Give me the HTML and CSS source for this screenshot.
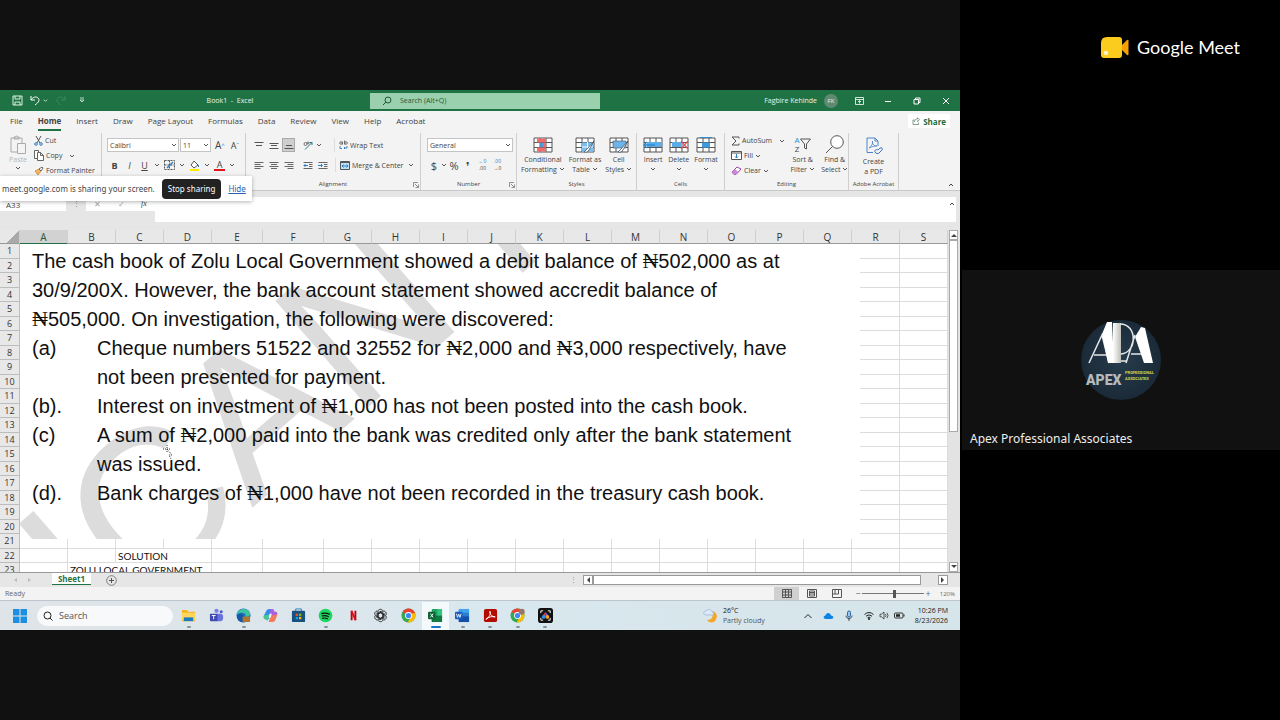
FILE: index.html
```html
<!DOCTYPE html>
<html lang="en">
<head>
    <meta charset="UTF-8">
    <meta name="viewport" content="width=device-width, initial-scale=1.0">
    <title>Google Meet</title>
    <link rel="stylesheet" href="styles.css">
</head>
<body>
    <!-- shared shapes -->
    <svg class="sprite" aria-hidden="true">
        <symbol id="chev" viewBox="0 0 6 6"><path d="M1 2l2 2 2-2" fill="none" stroke="#555" stroke-width="1"/></symbol>
        <symbol id="launch" viewBox="0 0 6 6"><path d="M.5 5V.5H5M2 2l3 3M5.500 2.500v3h-3" stroke="#666" fill="none" stroke-width=".7"/></symbol>
        <symbol id="chrome" viewBox="0 0 16 16">
            <circle cx="8" cy="8" r="7.500" fill="#34a853"/>
            <path d="M8 8L1.500 4.300A7.500 7.500 0 0 1 14.500 4.300z" fill="#ea4335"/>
            <path d="M8 8l6.500-3.700A7.500 7.500 0 0 1 8 15.500l-1-.1 3-5z" fill="#fbbc05"/>
            <path d="M4 4.300h10.500L15 5.500H8z" fill="#ea4335"/>
            <circle cx="8" cy="8" r="3.700" fill="#fff"/><circle cx="8" cy="8" r="2.800" fill="#4285f4"/>
        </symbol>
        <symbol id="grid" viewBox="0 0 20 16"><path d="M1 1h18v14H1zM1 5.500h18M1 10.500h18M7 1v14M13 1v14" stroke="#555" fill="#fff"/></symbol>
    </svg>

    <main class="meeting">
        <section class="stage">
            <div class="screen">
                <header class="titlebar">
                    <div class="quick">
                        <button aria-label="Save"><svg width="11" height="11" viewBox="0 0 11 11"><path d="M1 1h9v9H1zM3 1v3h5V1M3 10V7h5v3" fill="none" stroke="#dff0e5"/></svg></button>
                        <button aria-label="Undo"><svg width="11" height="11" viewBox="0 0 11 11"><path d="M1 1v4h4M1 5c2-3 5-4 7-2s1 4-3 7" fill="none" stroke="#fff"/></svg></button>
                        <svg class="white-chev" width="5" height="5" viewBox="0 0 6 6"><path d="M1 2l2 2 2-2" fill="none" stroke="#dff0e5"/></svg>
                        <button aria-label="Redo"><svg width="11" height="11" viewBox="0 0 11 11"><path d="M10 1v4H6M10 5C8 2 5 1 3 3s-1 4 3 7" fill="none" stroke="#3c8a5c"/></svg></button>
                        <button class="customize" aria-label="Customize toolbar"><svg width="6" height="7" viewBox="0 0 6 7"><path d="M1 1h4M1 3l2 2 2-2z" fill="none" stroke="#dff0e5" stroke-width=".8"/></svg></button>
                    </div>
                    <div class="doc-title">Book1&nbsp; - &nbsp;Excel</div>
                    <label class="tell-me">
                        <svg width="10" height="10" viewBox="0 0 10 10"><circle cx="6" cy="4" r="3" fill="none" stroke="#1d5a37"/><path d="M4 6L1 9" stroke="#1d5a37"/></svg>
                        <input type="text" placeholder="Search (Alt+Q)" aria-label="Search">
                    </label>
                    <div class="account">
                        <span>Fagbire Kehinde</span>
                        <span class="initials">FK</span>
                    </div>
                    <div class="window-buttons">
                        <button aria-label="Ribbon display"><svg width="9" height="8" viewBox="0 0 9 8"><path d="M.5.5h8v7h-8zM.5 2.500h8M4.500 6.500v-3M3 5l1.500-1.500L6 5" fill="none" stroke="#fff" stroke-width=".8"/></svg></button>
                        <button aria-label="Minimize"><svg width="8" height="8" viewBox="0 0 8 8"><path d="M1 4.500h6" stroke="#fff"/></svg></button>
                        <button aria-label="Restore"><svg width="8" height="8" viewBox="0 0 8 8"><path d="M1 2.500h4.500V7H1zM2.500 2V1H7v4.500H6" fill="none" stroke="#fff"/></svg></button>
                        <button aria-label="Close"><svg width="8" height="8" viewBox="0 0 8 8"><path d="M1 1l6 6M7 1L1 7" stroke="#fff"/></svg></button>
                    </div>
                </header>

                <nav class="tabs">
                    <a href="#">File</a>
                    <a href="#" class="active">Home</a>
                    <a href="#">Insert</a>
                    <a href="#">Draw</a>
                    <a href="#">Page Layout</a>
                    <a href="#">Formulas</a>
                    <a href="#">Data</a>
                    <a href="#">Review</a>
                    <a href="#">View</a>
                    <a href="#">Help</a>
                    <a href="#">Acrobat</a>
                    <button class="share"><svg width="8" height="8" viewBox="0 0 8 8"><path d="M2.500 3H1v4.500h5.500V5.500M2.500 5c0-2 1-3 3-3V.7L7.500 2.700 5.500 4.500V3.400" fill="none" stroke="#4f7a62" stroke-width=".7"/></svg>Share</button>
                </nav>

                <div class="ribbon">
                    <section class="group clipboard">
                        <button class="big paste"><svg width="18" height="20" viewBox="0 0 18 20"><path d="M2 3h11v6M2 3v14h6M5 4V2h1.500a1 1 0 0 1 2 0H10v2z" fill="none" stroke="#aaa"/><path d="M8.500 8.500h8v10h-8z" fill="#f4f4f4" stroke="#aaa"/></svg>Paste<svg class="chev"><use href="#chev"/></svg></button>
                        <div class="stack">
                            <button><svg width="9" height="11" viewBox="0 0 9 11"><path d="M2 1l4 7M7 1L3 8" stroke="#555" fill="none"/><circle cx="2" cy="9" r="1.300" fill="none" stroke="#2b7cc4"/><circle cx="7" cy="9" r="1.300" fill="none" stroke="#2b7cc4"/></svg>Cut</button>
                            <button><svg width="10" height="11" viewBox="0 0 10 11"><path d="M3 8.500H.5v-8h4V2M3.500 2.500h3l3 3v5h-6zM6.500 2.500v3h3" fill="#fff" stroke="#555" stroke-width=".9"/></svg>Copy<svg class="chev far"><use href="#chev"/></svg></button>
                            <button><svg width="10" height="10" viewBox="0 0 10 10"><path d="M1 5l4-2 2 2-3 4z" fill="#f3b463" stroke="#c98220" stroke-width=".7"/><path d="M5 3l3-2 1 1-2 3z" fill="#fff" stroke="#444" stroke-width=".8"/></svg>Format Painter</button>
                        </div>
                    </section>

                    <section class="group font">
                        <div class="row">
                            <select class="family" aria-label="Font"><option>Calibri</option></select>
                            <select class="size" aria-label="Font size"><option>11</option></select>
                            <button class="grow" aria-label="Increase font size">A<sup>^</sup></button>
                            <button class="shrink" aria-label="Decrease font size">A<sup>ˇ</sup></button>
                        </div>
                        <div class="row marks">
                            <button><b>B</b></button>
                            <button><i>I</i></button>
                            <button><u>U</u></button>
                            <svg class="chev"><use href="#chev"/></svg>
                            <button aria-label="Borders"><svg width="11" height="10" viewBox="0 0 11 10"><path d="M.5.5h10v9H.5zM.5 5h10M5.500.5v9" fill="none" stroke="#555" stroke-dasharray="2 1"/><path d="M3 8l6-6" stroke="#2b7cc4" stroke-width="1.500"/></svg></button>
                            <svg class="chev"><use href="#chev"/></svg>
                            <button aria-label="Fill colour"><svg width="11" height="11" viewBox="0 0 11 11"><path d="M2 5l3-4 4 4-4 3z" fill="#fff" stroke="#555"/><path d="M9.500 5v2" stroke="#2b7cc4"/><path d="M1 9h9v2H1z" fill="#ffeb00"/></svg></button>
                            <svg class="chev"><use href="#chev"/></svg>
                            <button class="colour">A</button>
                            <svg class="chev"><use href="#chev"/></svg>
                        </div>
                    </section>

                    <section class="group align">
                        <div class="row">
                            <button aria-label="Top align"><svg width="10" height="9" viewBox="0 0 10 9"><path d="M.5 1.500h9M2 4.500h6" stroke="#555"/></svg></button>
                            <button aria-label="Middle align"><svg width="10" height="9" viewBox="0 0 10 9"><path d="M.5 2.500h9M2 4.500h6M.5 7.500h9" stroke="#555"/></svg></button>
                            <button class="on" aria-label="Bottom align"><svg width="10" height="9" viewBox="0 0 10 9"><path d="M2 4.500h6M.5 7.500h9" stroke="#555"/></svg></button>
                            <button class="ruled" aria-label="Orientation"><svg width="10" height="9" viewBox="0 0 10 9"><path d="M2 8.500l7-7M6.500 1.500H9V4" stroke="#2b7c84" fill="none"/><circle cx="2.500" cy="3" r="1.500" fill="none" stroke="#555" stroke-width=".8"/><circle cx="5" cy="2" r="1" fill="none" stroke="#555" stroke-width=".8"/></svg></button>
                            <svg class="chev"><use href="#chev"/></svg>
                            <button class="wrap ruled"><svg width="9" height="10" viewBox="0 0 9 10"><circle cx="2" cy="3" r="1.300" fill="none" stroke="#555" stroke-width=".8"/><path d="M3.500 1.500v3M5.500.5v4" stroke="#555" stroke-width=".8"/><circle cx="7" cy="3" r="1.300" fill="none" stroke="#555" stroke-width=".8"/><path d="M1 6v2.500h2M8 6v2H5l1-1M5 8l1 1" fill="none" stroke="#2b7cc4" stroke-width=".9"/></svg>Wrap Text</button>
                        </div>
                        <div class="row">
                            <button aria-label="Align left"><svg width="10" height="9" viewBox="0 0 10 9"><path d="M.5 1.500h9M.5 3.500h6M.5 5.500h9M.5 7.500h6" stroke="#666"/></svg></button>
                            <button aria-label="Center"><svg width="10" height="9" viewBox="0 0 10 9"><path d="M.5 1.500h9M2 3.500h6M.5 5.500h9M2 7.500h6" stroke="#666"/></svg></button>
                            <button aria-label="Align right"><svg width="10" height="9" viewBox="0 0 10 9"><path d="M.5 1.500h9M3.500 3.500h6M.5 5.500h9M3.500 7.500h6" stroke="#666"/></svg></button>
                            <button class="ruled" aria-label="Decrease indent"><svg width="10" height="9" viewBox="0 0 10 9"><path d="M.5 1.500h9M6 3.500h3.500M6 5.500h3.500M.5 7.500h9" stroke="#666"/><path d="M5 4.500H1M2.500 3L1 4.500 2.500 6" fill="none" stroke="#2b7cc4"/></svg></button>
                            <button aria-label="Increase indent"><svg width="10" height="9" viewBox="0 0 10 9"><path d="M.5 1.500h9M6 3.500h3.500M6 5.500h3.500M.5 7.500h9" stroke="#666"/><path d="M0 4.500h4M3 3l1.500 1.500L3 6" fill="none" stroke="#2b7cc4"/></svg></button>
                            <button class="merge ruled"><svg width="10" height="9" viewBox="0 0 10 9"><path d="M.5.5h9v8h-9z" fill="#bfe0f5" stroke="#555"/><path d="M0 1.500h10" stroke="#555"/><path d="M2 5h6M3.500 3.500L2 5l1.500 1.500M6.500 3.500L8 5 6.500 6.500" fill="none" stroke="#2b7cc4"/></svg>Merge &amp; Center<svg class="chev"><use href="#chev"/></svg></button>
                        </div>
                        <h2>Alignment</h2>
                        <svg class="launch"><use href="#launch"/></svg>
                    </section>

                    <section class="group number">
                        <div class="row"><select class="format" aria-label="Number format"><option>General</option></select></div>
                        <div class="row">
                            <button class="sign">$</button>
                            <svg class="chev"><use href="#chev"/></svg>
                            <button class="sign">%</button>
                            <button class="sign comma">❜</button>
                            <button class="decimals"><span>←0</span><span>.00</span></button>
                            <button class="decimals"><span>.00</span><span>→0</span></button>
                        </div>
                        <h2>Number</h2>
                        <svg class="launch"><use href="#launch"/></svg>
                    </section>

                    <section class="group styles">
                        <button class="big"><svg width="20" height="16" viewBox="0 0 20 16"><use href="#grid"/><path d="M4 1.500h9v4H4zM7 6h6v4H7zM4 10.500h9v4H4z" fill="#f36c6c"/><path d="M7 6h3v4H7z" fill="#4d9bdc"/></svg><span>Conditional<br>Formatting <svg class="chev"><use href="#chev"/></svg></span></button>
                        <button class="big"><svg width="20" height="16" viewBox="0 0 20 16"><use href="#grid"/><path d="M7 5.500h11v9H7z" fill="#7bbdec"/><path d="M7 10h11M12.500 5v10" stroke="#fff"/><path d="M19 4l-7 8-3 3c2 .5 4 0 5-2z" fill="#fff" stroke="#456" stroke-width=".8"/></svg><span>Format as<br>Table <svg class="chev"><use href="#chev"/></svg></span></button>
                        <button class="big"><svg width="20" height="16" viewBox="0 0 20 16"><use href="#grid"/><path d="M4 4h13v7H4z" fill="#6db3e8" stroke="#456" stroke-width=".6"/><path d="M19 4l-7 8-3 3c2 .5 4 0 5-2z" fill="#fff" stroke="#456" stroke-width=".8"/></svg><span>Cell<br>Styles <svg class="chev"><use href="#chev"/></svg></span></button>
                        <h2>Styles</h2>
                    </section>

                    <section class="group cells">
                        <button class="big"><svg width="20" height="16" viewBox="0 0 20 16"><use href="#grid"/><path d="M4 5h15v5H4z" fill="#5aaee5"/><path d="M12 8H1M4 5L1 8l3 3" fill="none" stroke="#2b8cd4" stroke-width="1.300"/></svg><span>Insert<br><svg class="chev"><use href="#chev"/></svg></span></button>
                        <button class="big"><svg width="20" height="16" viewBox="0 0 20 16"><use href="#grid"/><path d="M3 5h9v5H3z" fill="#5aaee5"/><path d="M12 4l7 8M19 4l-7 8" stroke="#e25563" stroke-width="1.300"/></svg><span>Delete<br><svg class="chev"><use href="#chev"/></svg></span></button>
                        <button class="big"><svg width="20" height="16" viewBox="0 0 20 16"><use href="#grid"/><path d="M6 5.500h8v5H6z" fill="#3f9be0"/><path d="M4 .5h12" stroke="#2b8cd4"/></svg><span>Format<br><svg class="chev"><use href="#chev"/></svg></span></button>
                        <h2>Cells</h2>
                    </section>

                    <section class="group editing">
                        <div class="stack">
                            <button><svg width="9" height="10" viewBox="0 0 9 10"><path d="M8 2.500V1H1l4 4-4 4h7V7.500" fill="none" stroke="#555"/></svg>AutoSum<svg class="chev far"><use href="#chev"/></svg></button>
                            <button><svg width="11" height="9" viewBox="0 0 11 9"><path d="M.5.5h10v8H.5zM.5 2h10" fill="#fff" stroke="#555"/><path d="M5.500 3v4M4 5.500L5.500 7 7 5.500" fill="none" stroke="#2b7cc4"/></svg>Fill <svg class="chev"><use href="#chev"/></svg></button>
                            <button><svg width="11" height="9" viewBox="0 0 11 9"><path d="M1 6l5-5 4 2-5 5.500H3z" fill="#fff" stroke="#9a3fa8"/><path d="M1 6l3-3 3 3-2 2.500H3z" fill="#c98ad2"/></svg>Clear <svg class="chev"><use href="#chev"/></svg></button>
                        </div>
                        <button class="big"><span class="sort"><span><b>A</b><b>Z</b></span><svg width="11" height="12" viewBox="0 0 11 12"><path d="M.5 1h10l-4 5v5l-2-1V6z" fill="none" stroke="#555"/></svg></span><span>Sort &amp;<br>Filter <svg class="chev"><use href="#chev"/></svg></span></button>
                        <button class="big"><svg width="20" height="18" viewBox="0 0 20 18"><circle cx="12" cy="7" r="6.300" fill="#fff" stroke="#555"/><path d="M7.500 11.500L1 18" stroke="#555"/></svg><span>Find &amp;<br>Select <svg class="chev"><use href="#chev"/></svg></span></button>
                        <h2>Editing</h2>
                    </section>

                    <section class="group acrobat">
                        <button class="big"><svg width="18" height="18" viewBox="0 0 18 18"><path d="M8 15.500H2V1h8l3 3v5M10 1v3h3" fill="none" stroke="#4d84c8"/><path d="M4 11c3-2 4-5 3.500-7C7 7 9 9 12 9c-3 0-5 .5-8 2z" fill="none" stroke="#4d84c8" stroke-width=".8"/><path d="M10 15c-1-2 2-3 3-2l2-2c2-1 3 1 2 2l-3 3c-1 1-3 1-4-1z" fill="none" stroke="#3c74c8"/></svg><span>Create<br>a PDF</span></button>
                        <h2>Adobe Acrobat</h2>
                    </section>
                    <div class="collapse"><svg width="6" height="6" viewBox="0 0 6 6"><path d="M1 4l2-2 2 2" fill="none" stroke="#444"/></svg></div>
                </div>

                <div class="formula-bar">
                    <input class="name-box" type="text" value="A33" aria-label="Name box">
                    <span class="dots">⋮</span>
                    <div class="fx"><span>✕</span><span>✓</span><i>fx</i></div>
                    <div class="formula"><input type="text" aria-label="Formula"><svg width="6" height="6" viewBox="0 0 6 6"><path d="M1 4l2-2 2 2" fill="none" stroke="#444"/></svg></div>
                </div>

                <div class="sheet-area">
                    <div class="sheet">
                        <table>
                            <colgroup id="cols"></colgroup>
                            <thead><tr id="letters"></tr></thead>
                            <tbody id="rows"></tbody>
                        </table>
                        <article class="question">
                            <svg class="watermark" viewBox="0 0 840 295" aria-hidden="true">
                                <text transform="translate(232 264) rotate(-41)" x="-205" y="0">ICAN M</text>
                            </svg>
                            <p>The cash book of Zolu Local Government showed a debit balance of <span>₦</span>502,000 as at<br>30/9/200X. However, the bank account statement showed accredit balance of<br><span>₦</span>505,000. On investigation, the following were discovered:</p>
                            <dl>
                                <dt>(a)</dt><dd>Cheque numbers 51522 and 32552 for <span>₦</span>2,000 and <span>₦</span>3,000 respectively, have<br>not been presented for payment.</dd>
                                <dt>(b).</dt><dd>Interest on investment of <span>₦</span>1,000 has not been posted into the cash book.</dd>
                                <dt>(c)</dt><dd>A sum of <span>₦</span>2,000 paid into the bank was credited only after the bank statement<br>was issued.</dd>
                                <dt>(d).</dt><dd>Bank charges of <span>₦</span>1,000 have not been recorded in the treasury cash book.</dd>
                            </dl>
                            <svg class="pointer" width="10" height="14" viewBox="0 0 10 14"><path d="M4 0v8M0 4h8M4 4l5 6-3 0 2 4" fill="none" stroke="#333" stroke-dasharray="1 1"/></svg>
                        </article>
                    </div>
                    <div class="vscroll">
                        <button aria-label="Scroll up"><svg width="6" height="4" viewBox="0 0 6 4"><path d="M0 4l3-3 3 3z" fill="#444"/></svg></button>
                        <div class="thumb"></div>
                        <button aria-label="Scroll down"><svg width="6" height="4" viewBox="0 0 6 4"><path d="M0 0l3 3 3-3z" fill="#444"/></svg></button>
                    </div>
                </div>

                <div class="sheet-tabs">
                    <span class="arrows"><svg width="4" height="6" viewBox="0 0 4 6"><path d="M4 1v4L1 3z" fill="#bbb"/></svg><svg width="4" height="6" viewBox="0 0 4 6"><path d="M0 1v4l3-2z" fill="#bbb"/></svg></span>
                    <button class="sheet-tab">Sheet1</button>
                    <button class="add-sheet" aria-label="New sheet"><svg width="11" height="11" viewBox="0 0 11 11"><circle cx="5.500" cy="5.500" r="4.800" fill="none" stroke="#666" stroke-width=".8"/><path d="M5.500 3v5M3 5.500h5" stroke="#555"/></svg></button>
                    <span class="dots">⋮</span>
                    <div class="hscroll">
                        <button aria-label="Scroll left"><svg width="4" height="6" viewBox="0 0 4 6"><path d="M4 0v6L1 3z" fill="#444"/></svg></button>
                        <div class="thumb"></div>
                        <button aria-label="Scroll right"><svg width="4" height="6" viewBox="0 0 4 6"><path d="M0 0v6l3-3z" fill="#444"/></svg></button>
                    </div>
                </div>

                <div class="status">
                    <span>Ready</span>
                    <div class="views">
                        <button class="on" aria-label="Normal"><svg width="10" height="9" viewBox="0 0 10 9"><path d="M.5.5h9v8h-9zM.5 3h9M.5 6h9M3.500.5v8M6.500.5v8" fill="none" stroke="#555"/></svg></button>
                        <button aria-label="Page layout"><svg width="10" height="9" viewBox="0 0 10 9"><path d="M.5.5h9v8h-9zM2.500 2h5v5h-5zM3 3.500h4M3 5h4" fill="none" stroke="#555"/></svg></button>
                        <button aria-label="Page break"><svg width="10" height="9" viewBox="0 0 10 9"><path d="M.5.5h9v8h-9zM3 1v4M6.500 1v4M.5 5h6" fill="none" stroke="#555"/></svg></button>
                    </div>
                    <span class="zoom-sign">−</span>
                    <input type="range" min="0" max="100" value="52" aria-label="Zoom">
                    <span class="zoom-sign">+</span>
                    <span class="percent">120%</span>
                </div>

                <footer class="taskbar">
                    <button class="start" aria-label="Start"><svg width="16" height="16" viewBox="0 0 16 16"><path d="M1 1h6.500v6.500H1zM8.500 1H15v6.500H8.500zM1 8.500h6.500V15H1zM8.500 8.500H15V15H8.500z" fill="#1d8fe0"/></svg></button>
                    <label class="search"><svg width="10" height="10" viewBox="0 0 10 10"><circle cx="4.500" cy="4.500" r="3.500" fill="none" stroke="#222"/><path d="M7 7l2.500 2.500" stroke="#222"/></svg><input type="text" placeholder="Search" aria-label="Search Windows"></label>
                    <div class="apps">
                        <button class="open" aria-label="File Explorer"><svg viewBox="0 0 16 16"><path d="M1 2h5l2 2h7v10H1z" fill="#f6b41c"/><path d="M1 5h14v8H1z" fill="#ffd65a"/><path d="M3 10h10v4H3z" fill="#1a7cc4"/></svg></button>
                        <button aria-label="Teams"><svg viewBox="0 0 16 16"><circle cx="8" cy="3" r="2.300" fill="#7b83eb"/><circle cx="13" cy="4" r="1.700" fill="#5059c9"/><rect x="6" y="6" width="9" height="8" rx="3" fill="#6a72dd"/><rect x="1" y="6" width="8" height="8" rx="1" fill="#4048b4"/><path d="M3 8h4M5 8v4" stroke="#fff"/></svg></button>
                        <button class="open" aria-label="Edge"><svg viewBox="0 0 16 16"><circle cx="8" cy="8" r="7.500" fill="#1778c8"/><path d="M.7 7C2 1 10-1 14 3.500c3 4-1 7-4 6 2-4-4-6-9.300-2.500z" fill="#40c4a0"/><path d="M1 8c3-4 8-2 7 1-2 2 0 4 3 5-5 3-10 0-10-6z" fill="#1558a8"/><rect x="7" y="9" width="8" height="6" rx="1" fill="#b07532"/></svg></button>
                        <button aria-label="Copilot"><svg viewBox="0 0 16 16"><path d="M4 2q1-1 3-1h3L7 10l-1 2H3q-3 0-2-4z" fill="#2f8df0"/><path d="M1 8l6-1-2 6q-1 1-2-1H2Q0 11 1 8z" fill="#45c78a"/><path d="M12 4h1q3 0 2 4l-2 5q-1 2-3 2H6l3-9z" fill="#f37a5c"/><path d="M8 1h2q2 0 2 3h2q2 1 1 3l-6 1-2-1z" fill="#a861e0"/><path d="M7 6h2.500L8 10.500H6z" fill="#f3f6f9"/></svg></button>
                        <button aria-label="Store"><svg viewBox="0 0 16 16"><path d="M5 4V1h6v3" fill="none" stroke="#2a7cc0"/><rect x="1" y="3" width="14" height="12" rx="1" fill="#18507f"/><path d="M5 6h2.500v2.500H5z" fill="#f25022"/><path d="M8.500 6H11v2.500H8.500z" fill="#7fba00"/><path d="M5 9.500h2.500V12H5z" fill="#00a4ef"/><path d="M8.500 9.500H11V12H8.500z" fill="#ffb900"/></svg></button>
                        <button class="open" aria-label="Spotify"><svg viewBox="0 0 16 16"><circle cx="8" cy="8" r="7.300" fill="#1ed760"/><path d="M3.500 6c3-1 6-.7 9 .8M4 8.500c3-.8 5-.5 7.500.8M4.500 11c2-.6 4-.4 6 .7" fill="none" stroke="#111" stroke-width="1.300"/></svg></button>
                        <button aria-label="Netflix"><svg viewBox="0 0 16 16"><path d="M6 3v10M10 3v10" stroke="#b1060f" stroke-width="2"/><path d="M5.800 3l4.400 10" stroke="#e50914" stroke-width="2"/></svg></button>
                        <button aria-label="ChatGPT"><svg viewBox="0 0 16 16"><g fill="none" stroke="#222" stroke-width=".9"><path id="knot" d="M5.300 9.500V4c0-3 4-3.500 5.200-1.200M5.300 6.500L9 4.400l3.600 2"/><use href="#knot" transform="rotate(60 8 8)"/><use href="#knot" transform="rotate(120 8 8)"/><use href="#knot" transform="rotate(180 8 8)"/><use href="#knot" transform="rotate(240 8 8)"/><use href="#knot" transform="rotate(300 8 8)"/></g></svg></button>
                        <button aria-label="Chrome"><svg><use href="#chrome"/></svg></button>
                        <button class="open current" aria-label="Excel"><svg viewBox="0 0 16 16"><rect x="4" y="1" width="11" height="14" rx="1" fill="#21a366"/><path d="M9.500 8H15v6a1 1 0 0 1-1 1H4V8z" fill="#107c41"/><path d="M10 1h4a1 1 0 0 1 1 1v6h-5z" fill="#33c481"/><rect y="4" width="8" height="8" rx="1" fill="#0b6434"/><path d="M2.500 6l3 4M5.500 6l-3 4" stroke="#fff"/></svg></button>
                        <button class="open" aria-label="Word"><svg viewBox="0 0 16 16"><rect x="4" y="1" width="11" height="14" rx="1" fill="#2b7cd3"/><path d="M4 1h11v4H4z" fill="#41a5ee"/><path d="M4 9h11v6H4z" fill="#144fa8"/><rect y="4" width="8" height="8" rx="1" fill="#185abd"/><path d="M1.500 6l1.200 4L4 6.500 5.300 10l1.200-4" fill="none" stroke="#fff" stroke-width=".9"/></svg></button>
                        <button class="open" aria-label="Acrobat"><svg viewBox="0 0 16 16"><rect x="1" y="1" width="14" height="14" rx="2" fill="#b30b00"/><path d="M3 12c3-1 6-6 4.500-8.500C6 4 9 10 13 9.500 10 8.500 6 9.500 3 12z" fill="none" stroke="#fff"/></svg></button>
                        <button class="open" aria-label="Chrome profile"><svg viewBox="0 0 16 16"><use href="#chrome"/><circle cx="12.500" cy="4" r="3.200" fill="#94796a"/></svg></button>
                        <button class="open" aria-label="Studio"><svg viewBox="0 0 16 16"><rect width="16" height="16" rx="3" fill="#111"/><path d="M3 5.500V3h2.500M10.500 3H13v2.500M13 10.500V13h-2.500M5.500 13H3v-2.500" fill="none" stroke="#fff"/><path d="M8 4L5 8l3 1z" fill="#e9443a"/><path d="M8 4l3 4-3 1z" fill="#6c5ce7"/><circle cx="6" cy="9.500" r="2" fill="#2f8df0"/><circle cx="10" cy="9.500" r="2" fill="#f2a32c"/></svg></button>
                    </div>
                    <div class="weather">
                        <svg width="16" height="16" viewBox="0 0 16 16"><path d="M9 3c5 1 7 6 2 11-3 1-6 0-7-2 5 0 7-4 5-9z" fill="#f4a62a"/><path d="M3 3c2-3 6-1 6 1 3 0 2 3 0 3H3C0 7 0 3 3 3z" fill="#dce9f8" stroke="#88a8d8" stroke-width=".6"/></svg>
                        <span>26°C<br><small>Partly cloudy</small></span>
                    </div>
                    <div class="tray">
                        <svg width="10" height="10" viewBox="0 0 10 10"><path d="M1.500 7L5 3.500 8.500 7" fill="none" stroke="#222"/></svg>
                        <svg width="11" height="10" viewBox="0 0 11 10"><path d="M3 8C0 8 0 5 2.500 4.500 3.500 1 7.500 1.500 8 4.500c3 0 3 3.500 0 3.500z" fill="#0a84e0"/></svg>
                        <svg width="10" height="12" viewBox="0 0 10 12"><rect x="3.500" y="1" width="3" height="6" rx="1.500" fill="#9cc7ec" stroke="#27639c"/><path d="M2 5.500c0 4 6 4 6 0M5 8.500V11" fill="none" stroke="#345"/></svg>
                        <span class="net">
                            <svg width="10" height="9" viewBox="0 0 10 9"><path d="M.5 3.500q4.500-4 9 0M2 5.200q3-2.700 6 0M3.500 6.800q1.500-1.400 3 0" fill="none" stroke="#222"/><circle cx="5" cy="8" r=".9"/></svg>
                            <svg width="10" height="9" viewBox="0 0 10 9"><path d="M1 3.200h1.500L5 1v7L2.500 5.800H1zM6.500 3q1 1.500 0 3M8 1.800q2 2.700 0 5.400" fill="none" stroke="#333" stroke-width=".8"/></svg>
                            <svg width="11" height="9" viewBox="0 0 11 9"><rect x=".5" y="2" width="8.500" height="5" rx="1" fill="none" stroke="#333"/><path d="M2 3.200h4v2.600H2zM9.500 3.500h1v2h-1z" fill="#222"/></svg>
                        </span>
                        <time>10:26 PM<br>8/23/2026</time>
                    </div>
                </footer>

                <div class="sharing">
                    <span>meet.google.com is sharing your screen.</span>
                    <button>Stop sharing</button>
                    <a href="#">Hide</a>
                </div>
            </div>
        </section>

        <aside class="people">
            <div class="brand">
                <svg width="28" height="23" viewBox="0 0 28 23"><path d="M20 10l6-6q1.500-.8 1.500.8v13.400q0 1.600-1.500.8l-6-6z" fill="#f9a000"/><path d="M6 1h12q3 0 3 3v15q0 3-3 3H3q-3 0-3-3V7q0-6 6-6z" fill="#fbcb1e"/><circle cx="5" cy="17" r="2.300" fill="#fff3c4"/></svg>
                Google Meet
            </div>
            <div class="tile">
                <svg class="avatar" width="80" height="80" viewBox="0 0 80 80">
                    <defs>
                        <radialGradient id="disc"><stop offset="0" stop-color="#263c4d"/><stop offset="1" stop-color="#1b2a38"/></radialGradient>
                        <linearGradient id="beam"><stop offset="0" stop-color="#fff"/><stop offset="1" stop-color="#bdbdb8"/></linearGradient>
                    </defs>
                    <circle cx="40" cy="40" r="40" fill="url(#disc)"/>
                    <path d="M8 43l13-28 7 28M13 35h15" fill="none" stroke="#e4e8ea" stroke-width="1.500"/>
                    <path d="M21 14l5-12 5 0 2 41h-6z" fill="#fff"/>
                    <path d="M32 3h8v40h-8z" fill="url(#beam)"/>
                    <path d="M39 4c18 0 17 29 1 30M40 41h6M54 15L45 43M50 34h12" fill="none" stroke="#e4e8ea" stroke-width="1.500"/>
                    <path d="M54 17l6-10 4 1 8 35h-9z" fill="#fff"/>
                    <text x="5" y="65" class="apex">APEX</text>
                    <text x="44" y="54" class="apex-sub">PROFESSIONAL</text>
                    <text x="44" y="60" class="apex-sub">ASSOCIATES</text>
                </svg>
                <span class="name">Apex Professional Associates</span>
            </div>
        </aside>
    </main>

    <script>
        // Column widths, A to S
        const widths = [48, 48, 48, 48, 51, 61, 48, 48, 48, 48, 48, 48, 48, 48, 48, 48, 48, 48, 48];
        const cols = document.getElementById("cols");
        const letters = document.getElementById("letters");
        const rows = document.getElementById("rows");

        // Cell contents: row number -> [column index, text, cells it spans]
        const content = {
            22: [2, "SOLUTION", 2],
            23: [1, "ZOLU LOCAL GOVERNMENT", 3]
        };

        cols.innerHTML = "<col width='20'>" + widths.map(w => `<col width="${w}">`).join("");
        letters.innerHTML = "<th class='corner'></th>" + widths
            .map((w, i) => `<th>${String.fromCharCode(65 + i)}</th>`)
            .join("");

        for (let r = 1; r <= 23; r++) {
            let html = `<th>${r}</th>`;
            for (let c = 0; c < widths.length; c++) {
                const cell = content[r];
                if (cell && cell[0] === c) {
                    html += `<td colspan="${cell[2]}">${cell[1]}</td>`;
                    c += cell[2] - 1;
                } else {
                    html += "<td></td>";
                }
            }
            rows.insertAdjacentHTML("beforeend", `<tr>${html}</tr>`);
        }
    </script>
</body>
</html>
```

FILE: styles.css
```css
* {
    box-sizing: border-box;
}
body {
    margin: 0;
    background: #000;
    font-family: "Open Sans", "Noto Sans", sans-serif;
    color: #444;
}
button, input, select {
    font: inherit;
    color: inherit;
    border: none;
    background: none;
    padding: 0;
    margin: 0;
    min-width: 0;
}
button {
    display: flex;
    align-items: center;
    justify-content: center;
    white-space: nowrap;
}
a {
    color: inherit;
    text-decoration: none;
}
svg {
    flex: none;
}
.sprite {
    position: absolute;
    width: 0;
    height: 0;
}
.chev {
    width: 6px;
    height: 6px;
}
.meeting {
    display: grid;
    grid-template-columns: 3fr 1fr;
    min-height: 100vh;
}
.stage {
    display: flex;
    align-items: center;
    background: #111;
}
.screen {
    position: relative;
    display: flex;
    flex-direction: column;
    width: 100%;
    aspect-ratio: 16 / 9;
    background: #f3f3f3;
    overflow: hidden;
    font-size: 7px;
}

/* title bar */
.titlebar {
    display: grid;
    grid-template-columns: 90fr 280fr 230fr 245fr 115fr;
    align-items: center;
    height: 21px;
    background: #1f7244;
    color: #e8f4ec;
}
.quick {
    display: flex;
    align-items: center;
    gap: 7px;
    padding-left: 12px;
}
.white-chev {
    margin-left: -5px;
}
.customize {
    margin-left: 6px;
}
.doc-title {
    text-align: center;
}
.tell-me {
    display: flex;
    align-items: center;
    gap: 8px;
    height: 16px;
    padding-left: 12px;
    background: #9bd0ae;
    color: #1f5a38;
}
.titlebar .tell-me input::placeholder {
    color: #1f5a38;
}
.account {
    display: flex;
    align-items: center;
    justify-content: flex-end;
    gap: 7px;
    padding-right: 7px;
}
.initials {
    width: 14px;
    height: 14px;
    border-radius: 50%;
    background: #5f8a72;
    font-size: 6px;
    line-height: 14px;
    text-align: center;
}
.window-buttons {
    display: grid;
    grid-template-columns: repeat(4, 1fr);
}

/* ribbon tabs */
.tabs {
    display: flex;
    align-items: center;
    gap: 15px;
    height: 20px;
    padding: 0 10px;
    font-size: 8px;
}
.tabs a {
    line-height: 17px;
    border-bottom: 2px solid transparent;
}
.tabs .active {
    font-weight: 700;
    border-color: #1f7244;
}
.share {
    margin-left: auto;
    gap: 3px;
    height: 14px;
    padding: 0 4px;
    background: #fff;
    color: #1f6b40;
    font-weight: 700;
}

/* ribbon */
.ribbon {
    display: grid;
    grid-template-columns:
        minmax(0, 102fr) minmax(0, 144fr) minmax(0, 175fr)
        minmax(0, 96fr) minmax(0, 120fr) minmax(0, 88fr)
        minmax(0, 124fr) minmax(0, 50fr) minmax(0, 61fr);
    height: 60px;
    padding-top: 2px;
    border-bottom: 1px solid #c8c8c8;
}
.group {
    position: relative;
    border-right: 1px solid #cfcfcf;
    padding: 2px 0 0 6px;
}
.group h2 {
    position: absolute;
    left: 0;
    right: 0;
    bottom: 1px;
    margin: 0;
    font-size: 6px;
    font-weight: 400;
    line-height: 9px;
    text-align: center;
}
.launch {
    position: absolute;
    right: 1px;
    bottom: 2px;
    width: 6px;
    height: 6px;
}
.row {
    display: flex;
    align-items: center;
    height: 20px;
}
.stack {
    display: grid;
    grid-auto-rows: 15px;
    justify-items: start;
}
.stack button {
    gap: 2px;
}
.far {
    margin-left: 5px;
}
.big {
    display: flex;
    flex-direction: column;
    justify-content: flex-start;
    gap: 2px;
    line-height: 10px;
}
select {
    appearance: none;
    height: 14px;
    padding: 0 2px;
    border: 1px solid #c4c4c4;
    background: #fff url("data:image/svg+xml,%3Csvg xmlns='http://www.w3.org/2000/svg' width='6' height='6'%3E%3Cpath d='M1 2l2 2 2-2' fill='none' stroke='%23555'/%3E%3C/svg%3E") no-repeat right 1px center;
}
.clipboard {
    display: flex;
    gap: 7px;
    padding: 0 0 0 9px;
}
.paste {
    gap: 0;
    padding-top: 2px;
    color: #b5b5b5;
}
.font {
    padding-left: 5px;
}
.family {
    width: 72px;
}
.size {
    width: 31px;
    margin-left: 1px;
}
.grow, .shrink {
    margin-left: 4px;
    font-size: 10px;
}
.grow sup, .shrink sup {
    font-size: 6px;
    color: #2b7cc4;
}
.shrink {
    font-size: 9px;
    margin-left: 6px;
}
.marks {
    gap: 4px;
    padding-left: 2px;
    font-size: 9px;
}
.marks button {
    min-width: 11px;
}
.marks .colour {
    line-height: 9px;
    border-bottom: 2px solid #e3151a;
}
.align .row button {
    width: 13px;
    height: 14px;
    margin-right: 2px;
}
.align .row .ruled {
    margin-left: 4px;
}
.align .row .on {
    background: #cfcfcf;
    border: 1px solid #aaa;
}
.align .row .wrap, .align .row .merge {
    width: auto;
    gap: 2px;
    border-left: 1px solid #ddd;
    padding-left: 4px;
}
.align .row .wrap {
    margin-left: 12px;
}
.merge .chev {
    margin-left: 3px;
}
.number .format {
    width: 86px;
}
.sign {
    width: 14px;
    font-size: 11px;
}
.decimals {
    flex-direction: column;
    width: 15px;
    font-size: 5px;
    line-height: 7px;
}
.decimals span:first-child {
    color: #2b7cc4;
}
.styles, .cells, .acrobat {
    display: flex;
    justify-content: center;
    align-items: flex-start;
    gap: 4px;
    padding: 4px 0 0;
}
.cells {
    gap: 5px;
}
.editing {
    display: flex;
    align-items: flex-start;
    gap: 7px;
    padding-top: 0;
}
.editing .stack {
    width: 54px;
}
.editing .big {
    margin-top: 2px;
}
.sort {
    display: flex;
    align-items: center;
    height: 18px;
}
.sort span {
    display: grid;
    line-height: 9px;
}
.sort b {
    font-size: 8px;
    font-weight: 400;
    color: #444;
}
.sort b:first-child {
    color: #2b8cd4;
}
.acrobat h2 {
    white-space: nowrap;
}
.collapse {
    display: flex;
    align-items: flex-end;
    justify-content: flex-end;
    padding: 0 6px 2px;
}

/* formula bar */
.formula-bar {
    display: flex;
    align-items: flex-start;
    height: 39px;
    padding: 6px 4px 8px 0;
    background: #e6e6e6;
}
.name-box {
    width: 66px;
    height: 14px;
    padding-left: 6px;
    background: #fff;
    font-size: 8px;
}
.dots {
    width: 20px;
    text-align: center;
    line-height: 14px;
    color: #888;
}
.fx {
    display: flex;
    justify-content: space-around;
    width: 69px;
    height: 14px;
    background: #fff;
    line-height: 14px;
    font-size: 8px;
    color: #aaa;
}
.fx i {
    color: #444;
    font-family: "Liberation Serif", serif;
}
.formula {
    display: flex;
    flex: 1;
    height: 25px;
    padding: 4px 1px;
    background: #fff;
}
.formula input {
    flex: 1;
}

/* sheet */
.sheet-area {
    display: flex;
    flex: 1;
    min-height: 0;
}
.sheet {
    position: relative;
    flex: 1;
    overflow: hidden;
    background: #fff;
}
table {
    width: 100%;
    table-layout: fixed;
    border-collapse: separate;
    border-spacing: 0;
    color: #111;
}
th, td {
    height: 14px;
    padding: 0;
    border-right: 1px solid #dcdcdc;
    border-bottom: 1px solid #dcdcdc;
    font-size: 10px;
    line-height: 12px;
    white-space: nowrap;
}
th {
    background: #e8e8e8;
    border-color: #bdbdbd;
    font-weight: 400;
    color: #333;
}
td {
    padding-left: 2px;
    font-family: Lato, sans-serif;
}
tbody th {
    font-size: 9px;
}
tbody tr:nth-child(odd) > * {
    height: 15px;
}
thead th {
    border-right-color: #cfcfcf;
    border-bottom-color: #999;
}
thead th:nth-child(2) {
    background: #d2d2d2;
    border-bottom-color: #1f7244;
    color: #1f5a38;
}
.corner {
    background: linear-gradient(135deg, #e8e8e8 60%, #aaa 60%);
}
.question {
    position: absolute;
    top: 14px;
    left: 20px;
    width: 840px;
    height: 295px;
    padding: 3px 12px;
    background: #fff;
    color: #111;
    font-family: "Liberation Sans", Arial, sans-serif;
    font-size: 20px;
    line-height: 29px;
    white-space: nowrap;
}
.question p, .question dl {
    position: relative;
    margin: 0;
}
.question dl {
    display: grid;
    grid-template-columns: 65px 1fr;
}
.question dd {
    margin: 0;
}
.question span {
    font-family: "Liberation Serif", serif;
    font-size: 22px;
    line-height: 20px;
}
.watermark {
    position: absolute;
    top: 0;
    left: 0;
    width: 840px;
    height: 295px;
    font-size: 205px;
    fill: #dcdcdc;
}
.pointer {
    position: absolute;
    left: 143px;
    top: 201px;
}
.vscroll {
    display: flex;
    flex-direction: column;
    width: 12px;
    padding: 0 2px 0 1px;
    background: #e3e3e3;
}
.vscroll button {
    height: 10px;
    border: 1px solid #aaa;
    background: #fff;
}
.vscroll .thumb {
    height: 56%;
    margin-bottom: auto;
    border: 1px solid #aaa;
    background: #fff;
}
.sheet-tabs {
    display: flex;
    align-items: center;
    height: 15px;
    border-top: 1px solid #999;
    background: #e6e6e6;
}
.arrows {
    display: flex;
    gap: 11px;
    padding-left: 13px;
    width: 52px;
}
.sheet-tab {
    align-self: flex-start;
    width: 39px;
    height: 12px;
    background: #fff;
    border-bottom: 1px solid #1f7244;
    color: #1f7244;
    font-size: 8px;
    font-weight: 700;
}
.add-sheet {
    margin-left: 15px;
    margin-right: auto;
}
.hscroll {
    display: flex;
    width: 38%;
    height: 10px;
    margin-right: 12px;
}
.hscroll button {
    width: 10px;
    border: 1px solid #999;
    background: #fff;
}
.hscroll .thumb {
    flex: 1;
    margin-right: 17px;
    border: 1px solid #999;
    background: #fff;
}
.status {
    display: flex;
    align-items: center;
    height: 13px;
    padding: 0 5px;
    color: #666;
}
.views {
    display: flex;
    margin-left: auto;
    margin-right: 5px;
}
.views button {
    width: 25px;
    height: 13px;
}
.views .on {
    background: #d0d0d0;
}
.zoom-sign {
    width: 8px;
    text-align: center;
    font-size: 9px;
    line-height: 12px;
}
.status input {
    appearance: none;
    width: 62px;
    height: 9px;
    background: linear-gradient(#777, #777) no-repeat center / 100% 1px;
}
.status input::-webkit-slider-thumb {
    appearance: none;
    width: 3px;
    height: 8px;
    background: #555;
}
.percent {
    width: 23px;
    text-align: right;
    font-size: 6px;
}

/* taskbar */
.taskbar {
    display: flex;
    align-items: center;
    height: 30px;
    background: linear-gradient(90deg, #dfe4e8, #d9e7ee 50%, #d6e5ea);
    border-top: 1px solid #bcc6cc;
    color: #222;
}
.start {
    width: 37px;
    padding-left: 3px;
}
.search {
    display: flex;
    align-items: center;
    gap: 6px;
    width: 136px;
    height: 20px;
    padding-left: 6px;
    border-radius: 10px;
    background: #f7f9fa;
    font-size: 9px;
}
.search input {
    width: 100%;
}
input::placeholder {
    color: #555;
    opacity: 1;
}
.apps {
    display: grid;
    grid-template-columns: repeat(14, 1fr);
    width: 40%;
    margin-left: 2px;
}
.apps button {
    position: relative;
    height: 28px;
}
.apps svg {
    width: 15px;
    height: 15px;
}
.apps .current {
    background: #f4f9fb;
}
.apps .open::after {
    content: "";
    position: absolute;
    left: 50%;
    bottom: 2px;
    width: 4px;
    height: 2px;
    margin-left: -2px;
    border-radius: 1px;
    background: #8a9296;
}
.apps .current::after {
    width: 10px;
    margin-left: -5px;
    background: #1976c5;
}
.weather {
    display: flex;
    align-items: center;
    gap: 4px;
    margin-left: auto;
    line-height: 10px;
}
.weather small {
    font-size: 7px;
    color: #555;
}
.tray {
    display: flex;
    align-items: center;
    gap: 10px;
    padding: 0 12px 0 38px;
}
.net {
    display: flex;
    gap: 5px;
}
.tray time {
    text-align: right;
    line-height: 10px;
}

/* sharing notice */
.sharing {
    position: absolute;
    left: 0;
    top: 86px;
    display: flex;
    align-items: center;
    gap: 7px;
    height: 25px;
    padding: 0 6px 0 2px;
    background: #fff;
    box-shadow: 0 1px 4px rgba(0, 0, 0, 0.3);
    font-family: "Noto Sans", sans-serif;
    font-size: 8px;
    white-space: nowrap;
}
.sharing button {
    height: 20px;
    padding: 0 6px;
    border-radius: 4px;
    background: #222;
    color: #fff;
}
.sharing a {
    color: #2a5db0;
    text-decoration: underline;
}

/* right column */
.people {
    display: grid;
    grid-template-rows: 1fr auto 1fr;
    color: #fff;
}
.brand {
    display: flex;
    align-items: center;
    align-self: start;
    justify-content: flex-end;
    gap: 8px;
    padding: 34px 40px 0 0;
    font-family: Lato, sans-serif;
    font-size: 18px;
    line-height: 26px;
}
.tile {
    position: relative;
    display: flex;
    align-items: center;
    justify-content: center;
    height: 180px;
    margin-left: 2px;
    background: #111;
}
.name {
    position: absolute;
    left: 8px;
    bottom: 2px;
    font-family: "Noto Sans", sans-serif;
    font-size: 12px;
    line-height: 18px;
    color: #eee;
}
.apex {
    font: 900 14px Roboto, sans-serif;
    fill: #b5b9ba;
}
.apex-sub {
    font: 700 4px Roboto, sans-serif;
    fill: #d9d44a;
}
```
